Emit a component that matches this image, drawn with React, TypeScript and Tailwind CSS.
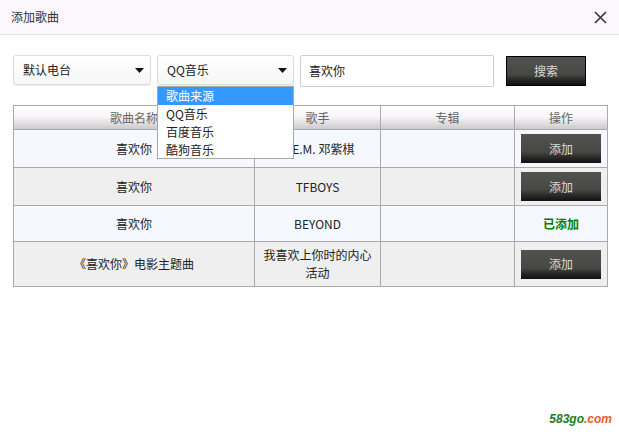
import React from 'react';

const rows = [
  { name: '喜欢你', singer: 'G.E.M. 邓紫棋', album: '', added: false, h: 'h-[38px]', bg: 'bg-[#f5f9ff]' },
  { name: '喜欢你', singer: 'TFBOYS', album: '', added: false, h: 'h-[38px]', bg: 'bg-[#efefef]' },
  { name: '喜欢你', singer: 'BEYOND', album: '', added: true, h: 'h-[36px]', bg: 'bg-[#f5f9ff]' },
  { name: '《喜欢你》电影主题曲', singer: '我喜欢上你时的内心活动', album: '', added: false, h: 'h-[45px]', bg: 'bg-[#efefef]' },
];

const Caret = () => (
  <svg width="9" height="5" viewBox="0 0 9 5" className="shrink-0">
    <path d="M0 0h9L4.5 5z" fill="#111" />
  </svg>
);

const DarkButton = ({ label, bordered }: { label: string; bordered?: boolean }) => (
  <button
    className={`w-full h-full text-[12px] text-[#d8d8d8] bg-[linear-gradient(to_bottom,#52524f_0%,#474745_62%,#2a2a29_80%,#111111_100%)] ${
      bordered ? 'border border-black' : ''
    }`}
  >
    {label}
  </button>
);

export default function App() {
  return (
    <div className="relative w-[619px] h-[438px] bg-white text-[12px] text-[#222] font-['Noto_Sans_CJK_SC','Microsoft_YaHei',sans-serif] overflow-hidden">
      {/* header */}
      <div className="h-[35px] flex items-center justify-between pl-[11px] pr-[12px] bg-[#fcf7fc] border-b border-[#e6e4e6]">
        <span className="text-[12px] text-[#333] leading-none">添加歌曲</span>
        <svg width="13" height="13" viewBox="0 0 13 13">
          <path d="M1 1l11 11M12 1L1 12" stroke="#333" strokeWidth="1.6" />
        </svg>
      </div>

      <div className="px-[13px] pt-[20px]">
        {/* controls */}
        <div className="flex items-start h-[33px]">
          <div className="w-[138px] h-[30px] flex items-center justify-between pl-[9px] pr-[6px] border border-[#dcdcdc] rounded-[3px] bg-[linear-gradient(to_bottom,#ffffff,#f6f6f6)] shadow-[0_1px_1px_rgba(0,0,0,0.08)]">
            <span className="leading-none">默认电台</span>
            <Caret />
          </div>
          <div className="relative ml-[6px] w-[137px]">
            <div className="h-[30px] flex items-center justify-between pl-[9px] pr-[6px] border border-[#dcdcdc] rounded-[3px] bg-[linear-gradient(to_bottom,#ffffff,#f6f6f6)] shadow-[0_1px_1px_rgba(0,0,0,0.08)]">
              <span className="leading-none">QQ音乐</span>
              <Caret />
            </div>
            <ul className="absolute z-10 left-0 top-[31px] w-[137px] bg-white border border-[#a8a8a8] py-0">
              <li className="h-[18px] leading-[18px] pl-[8px] bg-[#3399ff] text-white">歌曲来源</li>
              <li className="h-[18px] leading-[18px] pl-[8px]">QQ音乐</li>
              <li className="h-[18px] leading-[18px] pl-[8px]">百度音乐</li>
              <li className="h-[17px] leading-[17px] pl-[8px]">酷狗音乐</li>
            </ul>
          </div>
          <div className="ml-[6px] w-[194px] h-[32px] flex items-center pl-[8px] border border-[#cfcfcf] rounded-[2px]">
            <span className="leading-none">喜欢你</span>
          </div>
          <div className="ml-[12px] mt-[1px] w-[80px] h-[30px]">
            <DarkButton label="搜索" bordered />
          </div>
        </div>

        {/* table */}
        <table className="mt-[17px] w-[594px] border-collapse border border-[#aaaaaa] table-fixed text-center">
          <colgroup>
            <col className="w-[241px]" />
            <col className="w-[126px]" />
            <col className="w-[134px]" />
            <col className="w-[93px]" />
          </colgroup>
          <thead>
            <tr className="h-[24px] bg-[linear-gradient(to_bottom,#ffffff_0%,#f7f5f7_45%,#c8c6c8_100%)] text-[#666]">
              <th className="font-normal border border-[#aaaaaa] leading-none">歌曲名称</th>
              <th className="font-normal border border-[#aaaaaa] leading-none">歌手</th>
              <th className="font-normal border border-[#aaaaaa] leading-none">专辑</th>
              <th className="font-normal border border-[#aaaaaa] leading-none">操作</th>
            </tr>
          </thead>
          <tbody>
            {rows.map((r, i) => (
              <tr key={i} className={`${r.h} ${r.bg}`}>
                <td className="border border-[#aaaaaa] leading-[18px]">{r.name}</td>
                <td className="border border-[#aaaaaa] leading-[18px] px-[8px]">{r.singer}</td>
                <td className="border border-[#aaaaaa]">{r.album}</td>
                <td className="border border-[#aaaaaa] px-[6px]">
                  {r.added ? (
                    <span className="font-bold text-[#008000]">已添加</span>
                  ) : (
                    <div className="h-[29px]">
                      <DarkButton label="添加" />
                    </div>
                  )}
                </td>
              </tr>
            ))}
          </tbody>
        </table>
      </div>

      {/* watermark */}
      <div className="absolute right-[7px] bottom-[13px] text-[12px] italic font-bold leading-none font-['Liberation_Sans',sans-serif]">
        <span className="text-[#1e7b1e]">583go</span>
        <span className="text-[#ee5a2a]">.com</span>
      </div>
    </div>
  );
}
